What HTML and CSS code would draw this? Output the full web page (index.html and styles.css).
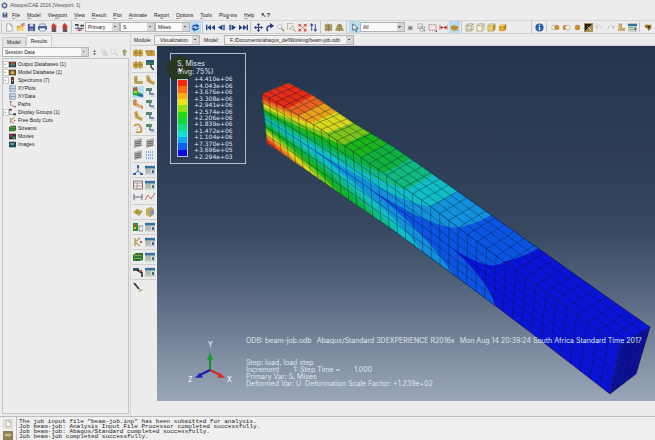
FILE: index.html
```html
<!DOCTYPE html>
<html lang="en">
<head>
<meta charset="utf-8">
<title>Abaqus/CAE 2016 [Viewport: 1]</title>
<link rel="stylesheet" href="styles.css">
</head>
<body>
<svg class="defs" aria-hidden="true">
  <symbol id="logo" viewBox="0 0 10 10"><path d="M5 .5 9 3v4L5 9.500 1 7V3z" fill="#56658c"/><circle cx="5" cy="5" r="2" fill="#eef"/></symbol>
  <symbol id="new" viewBox="0 0 10 10"><path d="M2 1h4l2 2v6H2z" fill="#fff" stroke="#888" stroke-width=".7"/><path d="M6 1v2h2" fill="none" stroke="#888" stroke-width=".7"/></symbol>
  <symbol id="open" viewBox="0 0 10 10"><path d="M1 3h3l1 1h3v5H1z" fill="#d8a83a"/><path d="m1 9 2-4h7L8 9z" fill="#f5d77c"/><path d="M5 2q2-2 3 0M9 0v3H6z" stroke="#c33" fill="none" stroke-width=".7"/></symbol>
  <symbol id="save" viewBox="0 0 10 10"><path d="M1 1h8v8H1z" fill="#44548c"/><path d="M3 1h4v3H3z" fill="#cdd6ea"/><path d="M3 6h4v3H3z" fill="#8795bd"/></symbol>
  <symbol id="print" viewBox="0 0 10 10"><path d="M2 1h6v3H2zM2 6h6v3H2z" fill="#dce4f5" stroke="#5a6794" stroke-width=".6"/><path d="M0 3.500h10v4H0z" fill="#465a96"/><path d="M2 6h6v2H2z" fill="#fff"/></symbol>
  <symbol id="db" viewBox="0 0 10 10"><path d="M3 4h5v6H3z" fill="#6d5161"/><path d="M5 0 9 4H7v3H4V4H2z" fill="#c5382f"/></symbol>
  <symbol id="field" viewBox="0 0 10 10"><path d="M0 1h4v2H0zM6 2h4v2H6z" fill="#444"/><path d="M0 6h10M3 3l2 6 2-4" stroke="#556" fill="none"/><path d="M2 8h6" stroke="#c44"/></symbol>
  <symbol id="sync" viewBox="0 0 10 10"><path d="M1.500 4.500q2-3 5.500-1.500M8.500 5.500q-2 3-5.500 1.500" fill="none" stroke="#2458b0" stroke-width="1.600"/><path d="M6 .5 9.500 4 5.500 5zM4 9.500.5 6l4-1z" fill="#2458b0"/></symbol>
  <symbol id="first" viewBox="0 0 10 10"><path d="M0 2h1.500v6H0zM5.500 2v6l-4-3zM10 2v6L6 5z" fill="#1c3f7c"/></symbol>
  <symbol id="prev" viewBox="0 0 10 10"><path d="M6 2v6L1 5zM7 2h1.500v6H7z" fill="#1c3f7c"/></symbol>
  <symbol id="next" viewBox="0 0 10 10"><path d="M4 2v6l5-3zM1.500 2H3v6H1.500z" fill="#1c3f7c"/></symbol>
  <symbol id="last" viewBox="0 0 10 10"><path d="M8.500 2H10v6H8.500zM4.500 2v6l4-3zM0 2v6l4-3z" fill="#1c3f7c"/></symbol>
  <symbol id="pan" viewBox="0 0 10 10"><path d="M5 1v8M1 5h8" stroke="#26327e"/><path d="m5 0 2 2.500H3zM5 10l2-2.500H3zM0 5l2.500-2v4zM10 5 7.500 3v4z" fill="#26327e"/></symbol>
  <symbol id="rotate" viewBox="0 0 10 10"><path d="M3 9Q0 3 7 3" fill="none" stroke="#26327e" stroke-width="1.600"/><path d="M5.500 0 10 3 6 6z" fill="#26327e"/></symbol>
  <symbol id="mag" viewBox="0 0 10 10"><circle cx="4" cy="4" r="2.500" fill="#eee" stroke="#b5b5b5" stroke-width=".7"/><path d="m6 6 3 3" stroke="#8a7c68" stroke-width="1.300"/></symbol>
  <symbol id="magbox" viewBox="0 0 10 10"><path d="M.5.500h6v6h-6z" fill="none" stroke="#777" stroke-dasharray="1.500 1" stroke-width=".7"/><circle cx="6" cy="6" r="1.800" fill="#eee" stroke="#999" stroke-width=".7"/><path d="m7.500 7.500 2 2" stroke="#876"/></symbol>
  <symbol id="fit" viewBox="0 0 10 10"><path d="M.5 1h3v3h-3zM6.500 1h3v3h-3zM.5 6.500h3v3h-3zM6.500 6.500h3v3h-3z" fill="#d95f50"/><path d="m4 4 2 2M6 4 4 6" stroke="#822" stroke-width=".7"/></symbol>
  <symbol id="updown" viewBox="0 0 10 10"><path d="M3 2v7M7 1v7" stroke="#334294"/><path d="m3 0 2 3H1zM7 10 5 7h4z" fill="#334294"/></symbol>
  <symbol id="grid1" viewBox="0 0 10 10"><path d="M1 1h8v8H1z" fill="#b6a36b"/><path d="M5 1v8M1 3.500h8M1 6.500h8" stroke="#7c6d40" stroke-width=".7"/></symbol>
  <symbol id="grid2" viewBox="0 0 10 10"><path d="M3 1h4l3 8H0z" fill="#b6a36b"/><path d="M5 1v8M2 3.500h6M1 6.500h8" stroke="#7c6d40" stroke-width=".7"/></symbol>
  <symbol id="arrow" viewBox="0 0 10 10"><path d="M3 1v7l2-1.500L6.500 9.500l1-.5L6.500 6H9z" fill="#fff" stroke="#345" stroke-width=".8"/></symbol>
  <symbol id="sq" viewBox="0 0 10 10"><path d="M2 3h6v5H2z" fill="#bbb"/><path d="M3 4h3v3H3z" fill="#777"/></symbol>
  <symbol id="copy" viewBox="0 0 10 10"><path d="M1 1h5v5H1zM3.500 4h5v5h-5z" fill="#eee" stroke="#999" stroke-width=".8"/><path d="m5 5 4 4" stroke="#777"/></symbol>
  <symbol id="dash" viewBox="0 0 10 10"><path d="M1 2h8v6H1z" fill="none" stroke="#a33" stroke-dasharray="1.500 1" stroke-width=".8"/><path d="M8 10h2V8z" fill="#222"/></symbol>
  <symbol id="redpts" viewBox="0 0 10 10"><path d="M1 2v6M9 2v6M1 5h8" stroke="#c65549" stroke-width=".8"/><path d="M2 3l3 2-3 2zM8 3 5 5l3 2z" fill="#c22c22"/></symbol>
  <symbol id="gold" viewBox="0 0 10 10"><path d="m1 4 3-2 5 2v4L5 9 1 7z" fill="#c99a3a"/><path d="m1 4 4 2 4-2" fill="none" stroke="#805f18" stroke-width=".7"/></symbol>
  <symbol id="wire" viewBox="0 0 10 10"><path d="M1 3h6v6H1zM3 1h6v6H3zM1 3l2-2M7 3l2-2M7 9l2-2M1 9l2-2" fill="none" stroke="#9a905f" stroke-width=".7"/></symbol>
  <symbol id="hidden" viewBox="0 0 10 10"><path d="M1 3h6v6H1zM1 3l2-2h6v6L7 9M7 3l2-2" fill="#f4f2e6" stroke="#9a905f" stroke-width=".7"/></symbol>
  <symbol id="cube" viewBox="0 0 10 10"><path d="M1 3h6v6H1z" fill="#ecd06c"/><path d="m1 3 2-2h6L7 3z" fill="#f8eaa4"/><path d="M7 3l2-2v6L7 9z" fill="#b58d29"/><path d="M1 3h6v6H1zl2-2h6v6L7 9M7 3l2-2" fill="none" stroke="#957728" stroke-width=".5"/></symbol>
  <symbol id="solid" viewBox="0 0 10 10"><path d="M1 3h6v6H1z" fill="#d9a92e"/><path d="m1 3 2-2h6L7 3z" fill="#f0cf68"/><path d="M7 3l2-2v6L7 9z" fill="#97711c"/></symbol>
  <symbol id="info" viewBox="0 0 10 10"><circle cx="5" cy="5" r="4.500" fill="#275eae"/><path d="M5 4.200V8M5 2v1.300" stroke="#fff" stroke-width="1.500"/></symbol>
  <symbol id="balls" viewBox="0 0 10 10"><circle cx="3.500" cy="5" r="2.800" fill="#eee" stroke="#b5a58c" stroke-width=".7"/><circle cx="6.500" cy="5" r="2.800" fill="#c68c3e"/></symbol>
  <symbol id="balls2" viewBox="0 0 10 10"><circle cx="3.500" cy="5" r="2.800" fill="#c68c3e"/><circle cx="6.500" cy="5" r="2.800" fill="#eee" stroke="#b5a58c" stroke-width=".7"/></symbol>
  <symbol id="ball" viewBox="0 0 10 10"><circle cx="5" cy="5" r="3" fill="#c98b36"/></symbol>
  <symbol id="black" viewBox="0 0 10 10"><path d="M0 0h10v10H0z" fill="#aa8d55"/><path d="M1 1h8L4 6 1 9z" fill="#221c12"/><path d="m4 4 4 4" stroke="#efe2b0"/></symbol>
  <symbol id="undo" viewBox="0 0 10 10"><path d="M2 4q4-4 6 3" fill="none" stroke="#c4c4c4"/><path d="M1 2v4h3z" fill="#c4c4c4"/></symbol>
  <symbol id="shape" viewBox="0 0 10 10"><path d="M2 1h3v5h4v3H1z" fill="#cdb365"/><path d="M2 1h3v5h4" fill="none" stroke="#8d7a3c" stroke-width=".6"/></symbol>
  <symbol id="mgr" viewBox="0 0 10 10"><path d="M0 1h10v8H0z" fill="#dfe0cf" stroke="#8c9298" stroke-width=".5"/><path d="M0 1h10v2.500H0z" fill="#34719f"/><path d="M1 5h5M1 7h5" stroke="#8b968d"/><path d="M7 5h2v3H7z" fill="#3b6f96"/></symbol>
  <symbol id="query" viewBox="0 0 10 10"><path d="M1 2h7v4L5 9 4 6 1 5z" fill="#99762f"/><path d="m4 3 3 1-2 2z" fill="#2b2416"/></symbol>
  <symbol id="mesh1" viewBox="0 0 10 10"><path d="M0 2h10v6H0z" fill="#d0ae52"/><path d="M3 1v8M7 1v8M0 5h10" stroke="#8e6f26" stroke-width=".8"/></symbol>
  <symbol id="mesh2" viewBox="0 0 10 10"><path d="m0 3 7-1 3 1v5H2z" fill="#c9a449"/><path d="M3 3v5M6 2v6M0 3h9" stroke="#93742a" stroke-width=".7"/></symbol>
  <symbol id="optn" viewBox="0 0 10 10"><path d="M1 0h8v5H1z" fill="#337a54"/><path d="M1 0h8v2H1z" fill="#275b86"/><path d="M6 4v3l3 3" stroke="#333" fill="none" stroke-width="1.300"/></symbol>
  <symbol id="el" viewBox="0 0 10 10"><path d="M1 1h3v5h6v3H1z" fill="#bfae5c"/><path d="M4 1v8M1 5h3M7 6v3" stroke="#8a7b3c" stroke-width=".6"/></symbol>
  <symbol id="elbend" viewBox="0 0 10 10"><path d="m1 1 3-1 2 5 4 2-1 3-7-3z" fill="#c7a956"/><path d="m3 2 1 4 4 3" fill="none" stroke="#8a713c" stroke-width=".6"/></symbol>
  <symbol id="contour" viewBox="0 0 10 10"><path d="m0 1 4-1 1 5 5 2v3L0 8z" fill="#28a845"/><path d="M0 1l4-1v3H0z" fill="#d84a2d"/><path d="M1 4h3v2H1z" fill="#edcc30"/><path d="m5 7 5 1v2L5 9z" fill="#285fc0"/></symbol>
  <symbol id="opt2" viewBox="0 0 10 10"><path d="M1 1h6v3H1z" fill="#508a73"/><path d="M5 3v4h4" fill="none" stroke="#597994" stroke-width="1.500"/><path d="M6 8h4v2H6z" fill="#c2ceda"/></symbol>
  <symbol id="arrows" viewBox="0 0 10 10"><path d="m0 1 3-1 2 5 5 2v3L0 6z" fill="#ca8d43"/><path d="m3 3 5 5M3 6l5 3" stroke="#e8d282"/></symbol>
  <symbol id="hook" viewBox="0 0 10 10"><path d="M1 3q5-4 7 2t-5 4" fill="none" stroke="#c79346" stroke-width="1.800"/><path d="m3 7 4-4" stroke="#e7a9a0"/></symbol>
  <symbol id="film" viewBox="0 0 10 10"><path d="M1 2 9 0v8L1 10z" fill="#b4b4b0"/><path d="m2 4 6-1M2 6l6-1M2 8l6-1" stroke="#666"/></symbol>
  <symbol id="dots" viewBox="0 0 10 10"><path d="M0 0h10v10H0z" fill="#e1ebf3"/><path d="M1 2h8M1 5h8M1 8h8" stroke="#346fa5" stroke-width="1.200" stroke-dasharray="1 1"/></symbol>
  <symbol id="triad" viewBox="0 0 10 10"><path d="M5 1v5L1 9M5 6l4 3" fill="none" stroke="#3779bd"/><path d="M4 0h2v3H4zM0 8h3v2H0zM7 8h3v2H7z" fill="#2e65a9"/></symbol>
  <symbol id="table" viewBox="0 0 10 10"><path d="M.5 1h9v8h-9z" fill="#f5f1ef" stroke="#8e7676"/><path d="M1 3h8M1 6h8M4 3v6" stroke="#9b7676" stroke-width=".7"/></symbol>
  <symbol id="xy" viewBox="0 0 10 10"><path d="M1 2v6M9 2v6M1 5h8" stroke="#667" fill="none"/></symbol>
  <symbol id="plot" viewBox="0 0 10 10"><path d="m0 8 3-5 3 4 4-6" stroke="#b04b41" fill="none" stroke-dasharray="2 .7"/></symbol>
  <symbol id="sheet" viewBox="0 0 10 10"><path d="m0 5 4-3 6 2-4 5z" fill="#bca64c"/><path d="m2 4 6 3M5 2 3 7" stroke="#837331" stroke-width=".6"/></symbol>
  <symbol id="cut" viewBox="0 0 10 10"><path d="m1 2 5-2 3 2v5L5 10 1 8z" fill="#c4ab55"/><path d="m5 4 4-2v5L5 10z" fill="#8d93a8"/></symbol>
  <symbol id="color" viewBox="0 0 10 10"><path d="M0 1h5v8H0z" fill="#288c37"/><path d="M1 2h2v2H1z" fill="#e03c28"/><path d="M1 5h2v2H1z" fill="#edc832"/><path d="M6 4h4v5H6z" fill="#eee" stroke="#666" stroke-width=".7"/></symbol>
  <symbol id="fbd" viewBox="0 0 10 10"><path d="M2 1v8M2 5l5-4M2 5l5 4" stroke="#ba9c60" stroke-width="1.500" fill="none"/><path d="M7 4h2v2H7z" fill="#b55"/></symbol>
  <symbol id="stream" viewBox="0 0 10 10"><path d="m0 3 3-2h7v7l-3 1H0z" fill="#237432"/><path d="M1 4q4-2 8 0M1 7q4-2 8 0" fill="none" stroke="#9cad35"/></symbol>
  <symbol id="probe" viewBox="0 0 10 10"><path d="M0 1h6v3H0z" fill="#345b70"/><path d="m4 3 5 3v4" fill="none" stroke="#222" stroke-width="1.500"/><path d="M6 3h3v2H6z" fill="#b44"/></symbol>
  <symbol id="pen" viewBox="0 0 10 10"><path d="m1 1 5 6" stroke="#333" stroke-width="1.800"/><path d="m6 8 4-1-3 3z" fill="#8f9c55"/></symbol>
  <symbol id="bulb" viewBox="0 0 10 10"><path d="M2 3q3-4 6 0L6 6v3H4V6z" fill="#a2b84f" stroke="#667830" stroke-width=".7"/></symbol>
  <symbol id="spin" viewBox="0 0 10 10"><path d="m5 1 2 3H3zM5 9l2-3H3z" fill="#555"/></symbol>
  <symbol id="odb" viewBox="0 0 10 10"><path d="M0 1h10v8H0z" fill="#47362e"/><path d="M2 2h6v2H2z" fill="#d2502c"/><path d="M2 4h6v2H2z" fill="#3fa04a"/><path d="M2 6h6v2H2z" fill="#3565a8"/></symbol>
  <symbol id="mdb" viewBox="0 0 10 10"><path d="M0 1h10v8H0z" fill="#5a4524"/><path d="m2 4 3-2 3 2v3L5 8 2 7z" fill="#d9a63c"/></symbol>
  <symbol id="spec" viewBox="0 0 10 10"><path d="M3 0h4v10H3z" fill="#222"/><path d="M4 1h2v2H4z" fill="#d43"/><path d="M4 4h2v2H4z" fill="#dc3"/><path d="M4 7h2v2H4z" fill="#35b"/></symbol>
  <symbol id="xyi" viewBox="0 0 10 10"><path d="M1 1h8v8H1z" fill="#dfe8f2" stroke="#6c87a5"/><path d="M3 1v8M6 3v4M1 5h8" stroke="#6c87a5" stroke-width=".8"/></symbol>
  <symbol id="path" viewBox="0 0 10 10"><path d="M2 1v5l6 2" fill="none" stroke="#a88" stroke-width="1.300"/><path d="M1 0h3v2H1zM7 7h3v2H7z" fill="#b76960"/></symbol>
  <symbol id="groups" viewBox="0 0 10 10"><path d="M1 1v7h8" fill="none" stroke="#999" stroke-width="1.300"/><path d="M0 0h4v2H0zM6 6h4v3H6z" fill="#444"/></symbol>
  <symbol id="movie" viewBox="0 0 10 10"><path d="M0 1h10v8H0z" fill="#35324a"/><path d="M1 2h4v3H1z" fill="#bc3850"/><path d="M5 5h4v3H5z" fill="#41a148"/></symbol>
  <symbol id="image" viewBox="0 0 10 10"><path d="M0 1h10v8H0z" fill="#26495a"/><path d="M2 3h5v3H2z" fill="#62a98e"/></symbol>
</svg>

<header>
  <div class="title"><svg><use href="#logo"/></svg>Abaqus/CAE 2016 [Viewport: 1]</div>
  <nav class="menu">
    <svg class="doc"><use href="#save"/></svg>
    <a href="#"><u>F</u>ile</a><a href="#"><u>M</u>odel</a><a href="#">Vie<u>w</u>port</a><a href="#"><u>V</u>iew</a><a href="#"><u>R</u>esult</a><a href="#"><u>P</u>lot</a><a href="#"><u>A</u>nimate</a><a href="#">Re<u>p</u>ort</a><a href="#"><u>O</u>ptions</a><a href="#"><u>T</u>ools</a><a href="#">Plu<u>g</u>-ins</a><a href="#"><u>H</u>elp</a><a href="#" class="what">↖?</a>
  </nav>
  <div class="toolbar">
    <div class="set">
      <button aria-label="New"><svg><use href="#new"/></svg></button><button aria-label="Open"><svg><use href="#open"/></svg></button><button aria-label="Save"><svg><use href="#save"/></svg></button><button aria-label="Print"><svg><use href="#print"/></svg></button><button aria-label="Save session"><svg><use href="#db"/></svg></button><button aria-label="Load session"><svg><use href="#db"/></svg></button>
    </div>
    <div class="set fields">
      <button aria-label="Field output"><svg><use href="#field"/></svg></button>
      <select aria-label="Variable type"><option>Primary</option></select><select aria-label="Output variable"><option>S</option></select><select aria-label="Invariant"><option>Mises</option></select>
      <button class="on" aria-label="Synchronize"><svg><use href="#sync"/></svg></button>
    </div>
    <div class="set">
      <button aria-label="First"><svg><use href="#first"/></svg></button><button aria-label="Previous"><svg><use href="#prev"/></svg></button><button aria-label="Next"><svg><use href="#next"/></svg></button><button aria-label="Last"><svg><use href="#last"/></svg></button>
    </div>
    <div class="set">
      <button aria-label="Pan"><svg><use href="#pan"/></svg></button><button aria-label="Rotate"><svg><use href="#rotate"/></svg></button><button aria-label="Magnify"><svg><use href="#mag"/></svg></button><button aria-label="Box zoom"><svg><use href="#magbox"/></svg></button><button aria-label="Fit view"><svg><use href="#fit"/></svg></button><button aria-label="Cycle views"><svg><use href="#updown"/></svg></button>
    </div>
    <div class="set">
      <button aria-label="Perspective off"><svg><use href="#grid1"/></svg></button><button aria-label="Perspective on"><svg><use href="#grid2"/></svg></button>
    </div>
    <div class="set filter">
      <button class="on" aria-label="Select"><svg><use href="#arrow"/></svg></button><select aria-label="Selection filter"><option>All</option></select><button aria-label="Selection options"><svg><use href="#sq"/></svg></button><button aria-label="Copy view"><svg><use href="#copy"/></svg></button><button aria-label="Box"><svg><use href="#dash"/></svg></button><button aria-label="Highlight"><svg><use href="#redpts"/></svg></button><button class="on" aria-label="Replace"><svg><use href="#gold"/></svg></button>
    </div>
    <div class="set">
      <button aria-label="Wireframe"><svg><use href="#wire"/></svg></button><button aria-label="Hidden"><svg><use href="#hidden"/></svg></button><button aria-label="Filled"><svg><use href="#cube"/></svg></button><button aria-label="Shaded"><svg><use href="#solid"/></svg></button>
    </div>
    <div class="set right">
      <button aria-label="Query"><svg><use href="#info"/></svg></button><i></i><button aria-label="Union"><svg><use href="#balls"/></svg></button><button aria-label="Intersect"><svg><use href="#balls2"/></svg></button><button aria-label="Either"><svg><use href="#ball"/></svg></button><button aria-label="Invert"><svg><use href="#black"/></svg></button><button aria-label="Undo"><svg><use href="#undo"/></svg></button><button aria-label="Redo"><svg class="flip"><use href="#undo"/></svg></button><button aria-label="Display group"><svg><use href="#shape"/></svg></button><button aria-label="Manager"><svg><use href="#mgr"/></svg></button><i></i><button aria-label="Colors"><svg><use href="#query"/></svg></button>
    </div>
  </div>
</header>

<main>
  <aside>
    <div class="tabs" role="tablist"><button role="tab">Model</button><button role="tab" aria-selected="true">Results</button></div>
    <div class="session">
      <select aria-label="Tree contents"><option>Session Data</option></select>
      <button aria-label="Scroll"><svg><use href="#spin"/></svg></button><button aria-label="Copy"><svg><use href="#copy"/></svg></button><button aria-label="Filter"><svg><use href="#magbox"/></svg></button><button aria-label="Tips"><svg><use href="#bulb"/></svg></button>
    </div>
    <ul class="tree">
      <li class="more"><svg><use href="#odb"/></svg>Output Databases (1)</li>
      <li class="more"><svg><use href="#mdb"/></svg>Model Database (1)</li>
      <li class="more"><svg><use href="#spec"/></svg>Spectrums (7)</li>
      <li><svg><use href="#xyi"/></svg>XYPlots</li>
      <li><svg><use href="#xyi"/></svg>XYData</li>
      <li><svg><use href="#path"/></svg>Paths</li>
      <li class="more"><svg><use href="#groups"/></svg>Display Groups (1)</li>
      <li><svg><use href="#fbd"/></svg>Free Body Cuts</li>
      <li><svg><use href="#stream"/></svg>Streams</li>
      <li><svg><use href="#movie"/></svg>Movies</li>
      <li><svg><use href="#image"/></svg>Images</li>
    </ul>
  </aside>

  <section class="work">
    <div class="context">
      <label for="module">Module:</label><select id="module" class="module"><option>Visualization</option></select>
      <label for="model">Model:</label><select id="model" class="model"><option>F:/Documents/abaqus_deflWorking/beam-job.odb</option></select>
    </div>
    <div class="stage">
      <div class="toolbox">
        <div><button aria-label="Undeformed"><svg><use href="#mesh1"/></svg></button><button aria-label="Deformed"><svg><use href="#mesh2"/></svg></button><button aria-label="Superimpose"><svg><use href="#mesh1"/></svg></button><button aria-label="Common options"><svg><use href="#optn"/></svg></button></div>
        <div><button aria-label="Plot undeformed shape"><svg><use href="#el"/></svg></button><button aria-label="Plot deformed shape"><svg><use href="#elbend"/></svg></button><button class="on" aria-label="Plot contours"><svg><use href="#contour"/></svg></button><button aria-label="Contour options"><svg><use href="#opt2"/></svg></button><button aria-label="Plot symbols"><svg><use href="#arrows"/></svg></button><button aria-label="Symbol options"><svg><use href="#opt2"/></svg></button><button aria-label="Plot orientations"><svg><use href="#elbend"/></svg></button><button aria-label="Orientation options"><svg><use href="#opt2"/></svg></button><button aria-label="Allow multiple states"><svg><use href="#hook"/></svg></button><button aria-label="Superimpose options"><svg><use href="#opt2"/></svg></button></div>
        <div><button aria-label="Animate scale factor"><svg><use href="#film"/></svg></button><button aria-label="Animate harmonic"><svg><use href="#film"/></svg></button><button aria-label="Animate history"><svg><use href="#film"/></svg></button><button aria-label="Animation options"><svg><use href="#dots"/></svg></button></div>
        <div><button aria-label="Coordinate system"><svg><use href="#triad"/></svg></button><button aria-label="System manager"><svg><use href="#mgr"/></svg></button></div>
        <div><button aria-label="XY data"><svg><use href="#table"/></svg></button><button aria-label="XY manager"><svg><use href="#mgr"/></svg></button><button aria-label="XY axis"><svg><use href="#xy"/></svg></button><button aria-label="XY plot"><svg><use href="#plot"/></svg></button></div>
        <div><button aria-label="View cut"><svg><use href="#sheet"/></svg></button><button aria-label="Cut manager"><svg><use href="#cut"/></svg></button></div>
        <div><button aria-label="Color code"><svg><use href="#color"/></svg></button><button aria-label="Color manager"><svg><use href="#mgr"/></svg></button></div>
        <div><button aria-label="Free body"><svg><use href="#fbd"/></svg></button><button aria-label="Free body manager"><svg><use href="#mgr"/></svg></button></div>
        <div><button aria-label="Stream"><svg><use href="#stream"/></svg></button><button aria-label="Stream manager"><svg><use href="#mgr"/></svg></button></div>
        <div><button aria-label="Probe"><svg><use href="#probe"/></svg></button><button aria-label="Probe manager"><svg><use href="#mgr"/></svg></button></div>
        <div class="end"><button aria-label="Edit"><svg><use href="#pen"/></svg></button></div>
      </div>

      <div class="viewport">
        <svg id="beam" class="scene" viewBox="157 46 498 354" preserveAspectRatio="xMinYMin meet" role="img" aria-label="Stress contours on a bent beam"></svg>
        <div class="legend">
          <div class="glow"></div>
          <p>S, Mises<br>(Avg: 75%)</p>
          <div class="scale">
            <div id="bands" class="bands"></div>
            <ol><li>+4.410e+06</li><li>+4.043e+06</li><li>+3.676e+06</li><li>+3.308e+06</li><li>+2.941e+06</li><li>+2.574e+06</li><li>+2.206e+06</li><li>+1.839e+06</li><li>+1.472e+06</li><li>+1.104e+06</li><li>+7.370e+05</li><li>+3.696e+05</li><li>+2.294e+03</li></ol>
          </div>
          <svg class="pointer" viewBox="0 0 10 10"><path d="M2 0v8l2-1.500L5.500 10l1.500-.7L5.500 6H8z" fill="#fff" stroke="#222" stroke-width=".6"/></svg>
        </div>
        <div class="state">
          <svg class="axes" viewBox="0 0 48 36">
            <path d="M23 19V8" stroke="#12902a" stroke-width="2"/><path d="m23 1 3 8h-6z" fill="#13a02c"/>
            <path d="m23 19 10 5" stroke="#d0301c" stroke-width="2"/><path d="m38 27-8-.5 3-5z" fill="#d8301c"/>
            <path d="m23 19-10 5" stroke="#1620b0" stroke-width="2"/><path d="m8 27 8-.5-3-5z" fill="#1820c4"/>
          </svg>
          <b class="ax y">Y</b><b class="ax z">Z</b><b class="ax x">X</b>
          <div class="notes">
            <p class="odb"><span>ODB: beam-job.odb</span><span>Abaqus/Standard 3DEXPERIENCE R2016x</span><span>Mon Aug 14 20:39:24 South Africa Standard Time 2017</span></p>
            <p>Step: load, load step</p>
            <p class="inc"><span>Increment</span><span>1: Step Time =</span><span>1.000</span></p>
            <p>Primary Var: S, Mises</p>
            <p>Deformed Var: U&nbsp; Deformation Scale Factor: +1.239e+02</p>
          </div>
        </div>
      </div>
    </div>
  </section>
</main>

<footer>
  <div class="side"><button aria-label="Messages"><svg><use href="#new"/></svg></button><button aria-label="Command line" class="cli">&gt;&gt;</button></div>
  <pre>The job input file "beam-job.inp" has been submitted for analysis.
Job beam-job: Analysis Input File Processor completed successfully.
Job beam-job: Abaqus/Standard completed successfully.
Job beam-job completed successfully.</pre>
</footer>
<script src="beam.js"></script>
</body>
</html>
```
FILE: styles.css
```css
* { box-sizing: border-box; margin: 0; padding: 0; }
body {
  min-height: 100vh;
  display: flex;
  flex-direction: column;
  overflow: hidden;
  background: #ececec;
  color: #222;
  font: 5px/8px "Liberation Sans", Arial, sans-serif;
}
svg { display: block; width: 9px; height: 9px; flex: none; }
.defs { position: absolute; width: 0; height: 0; }
a { color: inherit; text-decoration: none; }
ul, ol { list-style: none; }
button { border: 0; background: none; font: inherit; color: inherit; display: grid; place-items: center; }
select {
  appearance: none;
  height: 10px;
  padding: 0 8px 0 2px;
  border: 1px solid #b4b4b4;
  border-radius: 0;
  font: inherit;
  line-height: 8px;
  color: #222;
  background:
    conic-gradient(from -45deg at 50% 75%, #555 90deg, transparent 0) right 3px center / 3px 2px no-repeat,
    linear-gradient(#d6d6d6, #d6d6d6) right / 7px 100% no-repeat,
    #fafafa;
}
.on { background: #b9dcf3; }

.title { display: flex; align-items: center; gap: 2px; height: 10px; padding-left: 1px; color: #555; }
.title svg { width: 7px; height: 7px; }
.menu { display: flex; align-items: center; gap: 7px; height: 10px; padding-left: 2px; }
.menu .doc { width: 6px; height: 6px; margin-right: -3px; }
.menu u { text-underline-offset: 1px; text-decoration-thickness: 1px; text-decoration-color: #999; }
.menu .what { font-weight: bold; font-size: 6px; }
.toolbar { display: flex; align-items: center; gap: 1px; height: 14px; padding: 0 1px; border-top: 1px solid #d4d4d4; border-bottom: 1px solid #d0d0d0; }
.set { display: flex; align-items: center; padding-left: 2px; border-left: 1px solid #c6c6c6; }
.set button { width: 11px; height: 12px; }
.set i { width: 3px; height: 10px; margin: 0 1px; border-left: 1px solid #c6c6c6; }
.fields select { width: 35px; }
.filter select { width: 45px; }
.right { margin-left: auto; }
.flip { transform: scaleX(-1); }

main { flex: 1; display: grid; grid-template-columns: 130px 1fr; }
aside { display: flex; flex-direction: column; padding: 1px 1px 2px 2px; }
.tabs { display: flex; align-items: end; height: 11px; }
.tabs button { height: 9px; padding: 0 4px; border: 1px solid #ccc; border-bottom: 0; background: #e2e2e2; }
.tabs [aria-selected] { height: 11px; background: #f2f2f2; }
.session { display: flex; align-items: center; height: 12px; }
.session select { flex: 1; }
.session button { width: 10px; }
.session svg { width: 7px; height: 7px; }
.session button:nth-of-type(2), .session button:nth-of-type(3) { opacity: .5; }
.tree { flex: 1; padding: 1px 0; border: 1px solid #c4c4c4; background: #ededed; }
.tree li { display: flex; align-items: center; gap: 2px; height: 8px; padding-left: 4px; }
.tree li::before { content: ""; }
.tree .more { padding-left: 0; }
.tree .more::before { content: "+"; width: 4px; height: 5px; margin-right: -2px; border: 1px solid #c8c8c8; font-size: 4px; line-height: 3px; background: #fff; }
.tree svg { width: 7px; height: 7px; }

.work { display: flex; flex-direction: column; border-left: 1px solid #d8d8d8; padding-bottom: 15px; }
.context { display: flex; align-items: center; height: 12px; padding-left: 3px; border-bottom: 1px solid #d0d0d0; }
.context label { width: 20px; }
.context select { background-color: #f2f2f2; padding-left: 5px; }
.module { width: 46px; margin-right: 4px; }
.model { width: 130px; }
.stage { flex: 1; display: grid; grid-template-columns: 26px 1fr; }
.toolbox { padding: 1px; }
.toolbox div { display: grid; grid-template-columns: 12px 12px; grid-auto-rows: 12px; padding-bottom: 1px; margin-bottom: 1px; border-bottom: 1px solid #cfcfcf; }
.toolbox .end { border: 0; }
.toolbox svg { width: 10px; height: 10px; }

.viewport {
  position: relative;
  overflow: hidden;
  font: 7px/7px Inter, "DejaVu Sans", sans-serif;
  color: #dfe5ee;
  background: linear-gradient(#24354e, #2c3d55 30%, #374961 52%, #576780 70%, #7f8da1 87%, #9ba7b9);
}
.scene { position: absolute; inset: 0; width: 100%; height: 100%; }
.legend { position: absolute; isolation: isolate; left: 13px; top: 7px; width: 76px; padding: 6px 6px 3px; border: 1px solid #b4bdc9; }
.legend p { line-height: 8px; }
.glow { position: absolute; z-index: -1; left: -4px; top: 2px; width: 26px; height: 26px; border-radius: 50%; background: #29361f; }
.pointer { position: absolute; left: 6px; top: 12px; width: 7px; height: 9px; }
.scale { display: flex; gap: 6px; height: 84px; }
.bands { width: 11px; margin: 3px 0; border: 1px solid #bcc5cc; display: flex; flex-direction: column; }
.bands i { flex: 1; }
.scale ol { flex: 1; display: grid; grid-template-rows: repeat(13, 1fr); align-items: center; font: 6px/6px "DejaVu Sans", sans-serif; }

.state { position: absolute; left: 30px; right: 0; bottom: 14px; display: flex; gap: 11px; align-items: end; }
.axes { width: 48px; height: 36px; }
.ax { position: absolute; font-weight: normal; color: #fff; }
.y { left: 21px; top: 4px; }
.z { left: 1px; bottom: 4px; }
.x { left: 40px; bottom: 4px; }
.notes { white-space: nowrap; }
.odb { display: flex; gap: 5px; margin-bottom: 15px; }
.inc { display: flex; gap: 14px; }

footer { display: flex; height: 24px; border-top: 1px solid #bcbcbc; background: #efefef; }
.side { width: 17px; display: flex; flex-direction: column; align-items: center; gap: 2px; padding-top: 2px; border-right: 1px solid #bbb; }
.side button { width: 10px; height: 10px; background: #e2dfcf; }
.side svg { width: 7px; height: 7px; }
.side .cli { background: #8d8250; color: #fff; font-weight: bold; }
pre { padding: 2px 0 0 2px; font: 6px/5px "Liberation Mono", monospace; color: #222; }
```
FILE: beam.js
```js
const COLS = 40, ROWS = 6, DEPTH = 4;
const palette = ['#0a14d6', '#0c55e0', '#1290da', '#12bcc4', '#12b880', '#10b040',
  '#1cb41c', '#7cc41c', '#d8d81c', '#e8a01c', '#e8641c', '#e42c18'];

const lerp = (table, x) => {
  if (x <= table[0][0]) return table[0][1];
  for (let i = 1; i < table.length; i++) {
    const [x1, y1] = table[i], [x0, y0] = table[i - 1];
    if (x <= x1) return y0 + (y1 - y0) * (x - x0) / (x1 - x0);
  }
  return table[table.length - 1][1];
};

// Long edges of the deformed beam, x as a function of the element column.
const edge = (start, bend, table) => c => {
  const x = start + 7 * c + bend * c * c;
  return [x, lerp(table, x)];
};
const front = edge(262, 0.04875, [[262, 94], [283, 106], [322, 130], [362, 158], [403, 187], [430, 206], [460, 229], [507, 264], [620, 346]]);
const back = edge(288, 0.05125, [[288, 83], [312, 95], [352, 122], [395, 148], [457, 191], [535, 246], [597, 290], [650, 327]]);
const base = edge(267, 0.039375, [[267, 143], [312, 174], [352, 202], [393, 230], [450, 272], [497, 307], [530, 332], [610, 394]]);
const mix = (a, b, t) => [a[0] + (b[0] - a[0]) * t, a[1] + (b[1] - a[1]) * t];
const side = (c, v) => mix(front(c), base(c), v);
const top_ = (c, v) => mix(front(c), back(c), v);

// Stress level along the long edges and at the neutral axis, in contour bands.
const common = [[0, 13], [3.5, 11], [5, 10], [6.7, 9], [8.7, 8], [10.8, 7], [13, 6], [15.7, 5], [18.3, 4], [21, 3]];
const backFibre = [...common, [24.6, 2], [29.4, 1], [40, 0]];
const frontFibre = [...common, [24, 2], [28.8, 1], [40, 0]];
const core = [[0, 3.5], [6, 3], [14, 2], [23.5, 1], [40, 0]];

const fmt = pts => 'M' + pts.map(p => p.map(n => n.toFixed(1)).join()).join('L');
let out = '';
const fill = (pts, color) => { out += `<path d="${fmt(pts)}Z" fill="${color}"/>`; };
const steps = Array.from({ length: COLS * 5 + 1 }, (_, i) => i / 5);
const strip = (face, from, to, cols) =>
  [...cols.map(c => face(c, from(c))), ...cols.slice().reverse().map(c => face(c, to(c)))];

// Column where a level ends.
const endOf = (table, k) => lerp(table.slice().reverse().map(([c, s]) => [s, c]), k);

fill(strip(side, () => 0, () => 1, steps), palette[0]);
fill(strip(top_, () => 0, () => 1, steps), palette[0]);
for (let k = 1; k < 12; k++) {
  [[frontFibre, 0, 0, 1], [backFibre, 1.2, 1, -1]].forEach(([fibre, shift, origin, dir]) => {
    const cols = steps.filter(c => lerp(fibre, c + shift) >= k);
    const reach = c => {
      const s = lerp(fibre, c + shift), m = lerp(core, c);
      const u = Math.max(0, Math.min(1, (k - m) / (s - m)));
      return origin + dir * (1 - u) / 2;
    };
    fill(strip(side, () => origin, reach, cols), palette[k]);
  });
  const a = endOf(frontFibre, k), b = endOf(backFibre, k);
  const rim = steps.filter(c => c < a);
  const far = steps.filter(c => c < b).reverse();
  const end = [0, .15, .3, .5, .75, 1].map(v => top_(b - (b - a) * (1 - v) ** 2, v));
  fill([...rim.map(front), ...end, ...far.map(back)], palette[k]);
}
const D = front(COLS), E = base(COLS), G = back(COLS), F = [636, 374];
fill([D, G, F, E], '#0c109c');

const line = (d, opacity) => {
  out += `<path d="${d}" fill="none" stroke="#061028" stroke-opacity="${opacity}" stroke-width=".7"/>`;
};
let mesh = '', frame = '';
for (let c = 1; c < COLS; c++) mesh += fmt([base(c), front(c), back(c)]);
for (let r = 1; r < ROWS; r++) mesh += fmt(steps.map(c => side(c, r / ROWS)));
for (let r = 1; r < DEPTH; r++) mesh += fmt(steps.map(c => top_(c, r / DEPTH)));
for (let r = 1; r < ROWS; r++) mesh += fmt([mix(D, E, r / ROWS), mix(G, F, r / ROWS)]);
for (let r = 1; r < DEPTH; r++) mesh += fmt([mix(D, G, r / DEPTH), mix(E, F, r / DEPTH)]);
[front, back, base].forEach(e => { frame += fmt(steps.map(e)); });
frame += fmt([front(0), back(0)]) + fmt([front(0), base(0)]) + fmt([D, G, F, E, D]);
line(mesh, .5);
line(frame, .7);
document.getElementById('beam').innerHTML = out;

const legend = ['#ff2410', '#ff6a10', '#ffb010', '#e8e810', '#8ce010', '#28d810',
  '#10d830', '#10dc80', '#10e0d8', '#10a8f0', '#1060f0', '#0808e0'];
document.getElementById('bands').innerHTML = legend.map(c => `<i style="background:${c}"></i>`).join('');
```
